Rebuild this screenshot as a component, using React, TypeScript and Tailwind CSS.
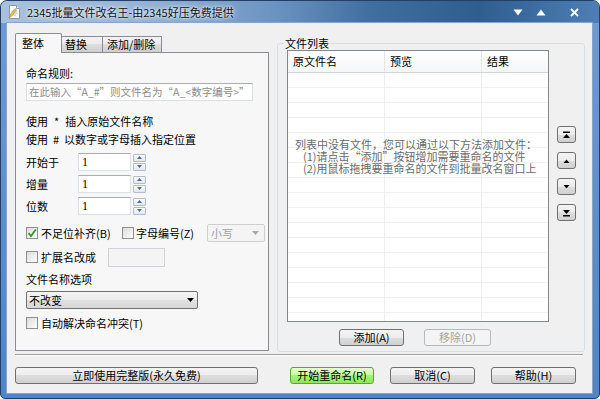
import React from "react";

const btnNormal =
	"flex items-center justify-center h-[17px] rounded-[3px] border border-[#707070] bg-[linear-gradient(#f4f4f4,#ececec_50%,#dedede_50%,#d0d0d0)] text-black";
const btnGreen =
	"flex items-center justify-center h-[17px] rounded-[3px] border border-[#56a82f] bg-[linear-gradient(#e6ffcf,#c6fb9f_50%,#a6f27a_50%,#8fe55c)] text-black";
const btnDisabled =
	"flex items-center justify-center h-[17px] rounded-[3px] border border-[#b5b9bc] bg-[#f4f4f4] text-[#a3a3a3]";

function Check({ checked }: { checked?: boolean }) {
	return (
		<div className="flex h-[12px] w-[12px] shrink-0 items-center justify-center border border-[#8e8f8f] bg-[linear-gradient(135deg,#dcdcdc,#fdfdfd)]">
			{checked && (
				<svg width="10" height="10" viewBox="0 0 10 10">
					<path d="M1.5 5.2 L4 8 L8.8 1.5" fill="none" stroke="#2f9a2a" strokeWidth="1.8" />
				</svg>
			)}
		</div>
	);
}

function Spinner() {
	return (
		<div className="ml-[2px] flex flex-col gap-[1px]">
			<div className="flex h-[8px] w-[13px] items-center justify-center rounded-[1px] border border-[#b4bcc8] bg-[linear-gradient(#fbfbfb,#e3e7ec)]">
				<svg width="5" height="3" viewBox="0 0 5 3">
					<path d="M0 3 L2.5 0 L5 3 Z" fill="#4a6a98" />
				</svg>
			</div>
			<div className="flex h-[8px] w-[13px] items-center justify-center rounded-[1px] border border-[#b4bcc8] bg-[linear-gradient(#fbfbfb,#e3e7ec)]">
				<svg width="5" height="3" viewBox="0 0 5 3">
					<path d="M0 0 L2.5 3 L5 0 Z" fill="#4a6a98" />
				</svg>
			</div>
		</div>
	);
}

function NumRow({ label }: { label: string }) {
	return (
		<div className="flex h-[18px] items-center">
			<span className="w-[52px] leading-[14px]">{label}</span>
			<div className="flex h-[18px] w-[53px] items-center border border-[#dbdfe6] border-t-[#abadb3] bg-white pl-[3px] font-['Liberation_Serif',serif] text-[12px]">
				1
			</div>
			<Spinner />
		</div>
	);
}

function ScrollBtn({ kind }: { kind: "top" | "up" | "down" | "bottom" }) {
	return (
		<div className={btnNormal + " w-[19px]"}>
			<svg width="9" height="8" viewBox="0 0 9 8">
				{kind === "top" && (
					<>
						<rect x="1" y="0.5" width="7" height="1.5" fill="#000" />
						<path d="M1 7 L4.5 3 L8 7 Z" fill="#000" />
					</>
				)}
				{kind === "up" && <path d="M1.5 6 L4.5 2.5 L7.5 6 Z" fill="#000" />}
				{kind === "down" && <path d="M1.5 2 L4.5 5.5 L7.5 2 Z" fill="#000" />}
				{kind === "bottom" && (
					<>
						<path d="M1 1 L4.5 5 L8 1 Z" fill="#000" />
						<rect x="1" y="6" width="7" height="1.5" fill="#000" />
					</>
				)}
			</svg>
		</div>
	);
}

export default function App() {
	const rows = Array(17).fill(0);

	return (
		<div className="h-[399px] w-[600px] bg-white font-['Noto_Sans_CJK_SC','Noto_Sans',sans-serif] text-[11px] text-black">
			<div className="flex h-[399px] w-[600px] flex-col overflow-hidden rounded-t-[7px] rounded-b-[5px] border border-[#243f66] bg-[linear-gradient(#6f9bd2,#4f84c8)]">
				{/* title bar */}
				<div className="flex h-[22px] shrink-0 items-center bg-[linear-gradient(90deg,#a9c1dc_0%,#93b1d3_25%,#6d95c2_45%,#3f6e9f_62%,#2f5e8e_80%,#4d7fb6_100%)]">
					<svg className="ml-[7px]" width="13" height="14" viewBox="0 0 13 14">
						<path d="M1.5 0.5 H8.5 L11.5 3.5 V13.5 H1.5 Z" fill="#fff" stroke="#8a9bb0" />
						<path d="M8.5 0.5 V3.5 H11.5" fill="#e6ecf3" stroke="#8a9bb0" />
						<path d="M3.5 6 H9.5 M3.5 8 H9.5 M3.5 10 H8" stroke="#9fc0e4" />
						<path d="M1 13 L2 10 L7 3.5 L8.5 4.7 L3.5 11.3 Z" fill="#f2c443" stroke="#b8862a" strokeWidth="0.6" />
					</svg>
					<span className="ml-[6px] text-[11px] leading-[14px] text-[#111] [text-shadow:0_0_6px_#ffffff,0_0_3px_#ffffff]">
						2345批量文件改名王-由2345好压免费提供
					</span>
					<div className="ml-auto mr-[20px] flex items-center">
						<svg width="10" height="7" viewBox="0 0 10 7">
							<path d="M0.5 0.5 L9.5 0.5 L5 6.5 Z" fill="#fff" />
						</svg>
						<svg className="ml-[13px]" width="10" height="7" viewBox="0 0 10 7">
							<path d="M0.5 6.5 L9.5 6.5 L5 0.5 Z" fill="#fff" />
						</svg>
						<svg className="ml-[24px]" width="9" height="9" viewBox="0 0 9 9">
							<path d="M1 1 L8 8 M8 1 L1 8" stroke="#fff" strokeWidth="1.8" />
						</svg>
					</div>
				</div>

				{/* client area */}
				<div className="mb-[5px] ml-[6px] mr-[7px] flex flex-1 flex-col bg-[#f0f0f0] pl-[8px] pt-[10px] shadow-[0_0_0_1px_#87a5cc]">
					<div className="flex h-[321px] items-start">
						{/* tab control */}
						<div className="flex flex-col">
							<div className="flex h-[19px] items-end">
								<div className="relative z-10 -mb-px h-[20px] w-[47px] rounded-t-[2px] border border-b-0 border-[#898c95] bg-[#f7f7f7] pl-[6px] pt-[1px] leading-[17px]">
									整体
								</div>
								<div className="h-[16px] w-[41px] border border-b-0 border-l-0 border-[#898c95] bg-[linear-gradient(#f2f2f2,#ebebeb_50%,#dddddd_50%,#cfcfcf)] pl-[3px] leading-[15px]">
									替换
								</div>
								<div className="h-[16px] w-[59px] border border-b-0 border-l-0 border-[#898c95] bg-[linear-gradient(#f2f2f2,#ebebeb_50%,#dddddd_50%,#cfcfcf)] pl-[4px] leading-[15px]">
									添加/删除
								</div>
							</div>
							<div className="flex h-[299px] w-[254px] flex-col border border-[#898c95] bg-[#f7f7f7] pl-[10px] pt-[13px]">
								<div className="leading-[14px]">命名规则:</div>
								<div className="mt-[3px] flex h-[18px] w-[227px] items-center overflow-hidden whitespace-nowrap border border-[#dbdfe6] border-t-[#abadb3] bg-white pl-[2px] text-[10.5px] text-[#8c8c8c]">
									在此输入“A_#”则文件名为“A_&lt;数字编号&gt;”
								</div>
								<div className="mt-[13px] leading-[14px]">
									使用<span className="mx-[6px]">*</span>插入原始文件名称
								</div>
								<div className="mt-[4px] leading-[14px]">
									使用<span className="mx-[5px]">#</span>以数字或字母插入指定位置
								</div>
								<div className="mt-[7px]">
									<NumRow label="开始于" />
								</div>
								<div className="mt-[4px]">
									<NumRow label="增量" />
								</div>
								<div className="mt-[4px]">
									<NumRow label="位数" />
								</div>
								<div className="mt-[9px] flex h-[18px] items-center">
									<div className="flex w-[96px] items-center gap-[3px]">
										<Check checked />
										<span className="leading-[14px]">不足位补齐(B)</span>
									</div>
									<div className="flex w-[85px] items-center gap-[2px]">
										<Check />
										<span className="leading-[14px]">字母编号(Z)</span>
									</div>
									<div className="flex h-[18px] w-[58px] items-center justify-between rounded-[2px] border border-[#cfcfcf] bg-[#f4f4f4] pl-[3px] pr-[5px] text-[#a0a0a0]">
										<span>小写</span>
										<svg width="7" height="4" viewBox="0 0 7 4">
											<path d="M0 0 H7 L3.5 4 Z" fill="#a8a8a8" />
										</svg>
									</div>
								</div>
								<div className="mt-[6px] flex h-[18px] items-center">
									<div className="flex w-[82px] items-center gap-[3px]">
										<Check />
										<span className="leading-[14px]">扩展名改成</span>
									</div>
									<div className="h-[19px] w-[57px] border border-[#cfd3d8] bg-[#f4f4f4]" />
								</div>
								<div className="mt-[6px] leading-[14px]">文件名称选项</div>
								<div className="mt-[5px] flex h-[18px] w-[172px] items-center justify-between rounded-[2px] border border-[#707070] bg-[linear-gradient(#f4f4f4,#ececec_50%,#e0e0e0_50%,#d8d8d8)] pl-[2px] pr-[3px]">
									<span>不改变</span>
									<svg width="7" height="4" viewBox="0 0 7 4">
										<path d="M0 0 H7 L3.5 4 Z" fill="#000" />
									</svg>
								</div>
								<div className="mt-[7px] flex items-center gap-[3px]">
									<Check />
									<span className="leading-[14px]">自动解决命名冲突(T)</span>
								</div>
							</div>
						</div>

						{/* file list group */}
						<fieldset className="ml-[8px] mt-[3px] w-[308px] rounded-[3px] border border-[#d5dfe5] pb-[5px] pl-[9px] pr-[8px]">
							<legend className="-ml-[3px] px-[1px] leading-[14px]">文件列表</legend>
							<div className="flex">
								<div className="flex h-[272px] w-[262px] flex-col border border-[#828790] bg-white">
									<div className="flex h-[22px] shrink-0 border-b border-[#d5d5d5] bg-[linear-gradient(#ffffff,#f5f6f7)]">
										<div className="flex w-[97px] items-center border-r border-[#e3e5e8] pl-[5px]">原文件名</div>
										<div className="flex w-[97px] items-center border-r border-[#e3e5e8] pl-[5px]">预览</div>
										<div className="flex flex-1 items-center pl-[5px]">结果</div>
									</div>
									<div className="relative flex-1 overflow-hidden">
										{rows.map((_, i) => (
											<div key={i} className="flex h-[15px] border-b border-[#f0f0f0]">
												<div className="w-[97px] border-r border-[#efefef]" />
												<div className="w-[97px] border-r border-[#efefef]" />
												<div className="flex-1" />
											</div>
										))}
										<div className="absolute left-[7px] top-[65px] text-[11px] leading-[12px] text-[#6a6a6a]">
											<div>列表中没有文件，您可以通过以下方法添加文件：</div>
											<div className="pl-[8px]">(1)请点击“添加”按钮增加需要重命名的文件</div>
											<div className="pl-[8px]">(2)用鼠标拖拽要重命名的文件到批量改名窗口上</div>
										</div>
									</div>
								</div>
								<div className="ml-[8px] flex flex-col gap-[9px] pt-[76px]">
									<ScrollBtn kind="top" />
									<ScrollBtn kind="up" />
									<ScrollBtn kind="down" />
									<ScrollBtn kind="bottom" />
								</div>
							</div>
							<div className="mt-[7px] flex gap-[20px] pl-[52px]">
								<div className={btnNormal + " w-[65px]"}>添加(A)</div>
								<div className={btnDisabled + " w-[67px]"}>移除(D)</div>
							</div>
						</fieldset>
					</div>

					<div className="h-[2px] w-[568px] border-b border-t border-b-white border-t-[#a0a0a0]" />

					<div className="mt-[11px] flex">
						<div className={btnNormal + " w-[243px]"}>立即使用完整版(永久免费)</div>
						<div className={btnGreen + " ml-[32px] w-[84px]"}>开始重命名(R)</div>
						<div className={btnNormal + " ml-[16px] w-[85px]"}>取消(C)</div>
						<div className={btnNormal + " ml-[16px] w-[85px]"}>帮助(H)</div>
					</div>
				</div>
			</div>
		</div>
	);
}
